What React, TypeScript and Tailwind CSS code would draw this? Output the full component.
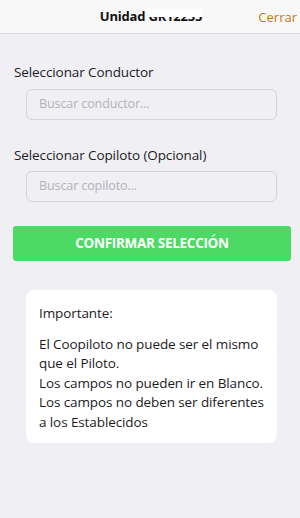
import React from "react";

export default function App() {
  return (
    <div
      className="w-[300px] h-[518px] bg-[#efeff4] flex flex-col text-[#1c1c1e]"
      style={{ fontFamily: '"Open Sans", "Noto Sans", sans-serif' }}
    >
      <div className="h-[34px] bg-[#f8f8f9] border-b border-[#dedee2] flex items-center relative shrink-0">
        <div className="flex-1 flex justify-center pl-[2px]">
          <span className="relative text-[13px] font-bold tracking-[-0.2px] text-[#111]">
            Unidad{" "}
            <span className="relative">
              GR12255
              <span className="absolute left-0 right-0 top-[2px] h-[8px] bg-white"></span>
            </span>
          </span>
        </div>
        <span className="absolute right-[3px] top-[8px] text-[13px] text-[#c27c14]">Cerrar</span>
      </div>

      <div className="flex flex-col">
        <div className="mt-[29px] pl-[14px] text-[13.5px] leading-[18px] tracking-[-0.1px]">Seleccionar Conductor</div>
        <div className="mt-[8px] ml-[26px] w-[251px] h-[31px] border border-[#d3d3d8] rounded-[6px] flex items-center pl-[12px] text-[12.5px] text-[#b3b3b8] tracking-[-0.1px]">
          Buscar conductor...
        </div>
        <div className="mt-[26px] pl-[14px] text-[13.5px] leading-[18px] tracking-[-0.1px]">Seleccionar Copiloto (Opcional)</div>
        <div className="mt-[7px] ml-[26px] w-[251px] h-[31px] border border-[#d3d3d8] rounded-[6px] flex items-center pl-[12px] text-[12.5px] text-[#b3b3b8] tracking-[-0.1px]">
          Buscar copiloto...
        </div>
        <div className="mt-[24px] ml-[13px] w-[278px] h-[35px] bg-[#4cd964] rounded-[3px] flex items-center justify-center text-white font-bold text-[13.5px] tracking-[-0.3px]">
          CONFIRMAR SELECCIÓN
        </div>
        <div className="mt-[29px] ml-[26px] w-[251px] bg-white rounded-[8px] px-[13px] pt-[14px] pb-[11px] text-[13.5px] tracking-[-0.1px] leading-[19.5px]">
          <div>Importante:</div>
          <div className="mt-[11px]">
            El Coopiloto no puede ser el mismo que el Piloto.
            <br />
            Los campos no pueden ir en Blanco.
            <br />
            Los campos no deben ser diferentes a los Establecidos
          </div>
        </div>
      </div>
    </div>
  );
}
